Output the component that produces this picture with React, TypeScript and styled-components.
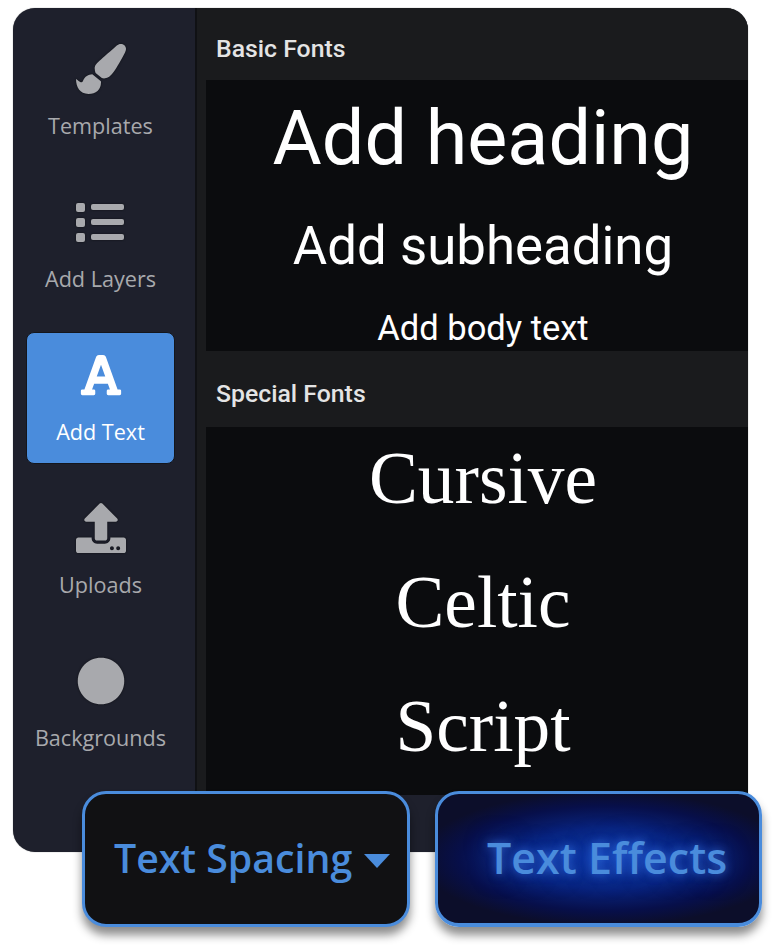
import React from 'react';
import styled, { createGlobalStyle } from 'styled-components';
import { FaCircle, FaFont, FaPaintBrush, FaUpload } from 'react-icons/fa';

const GlobalStyle = createGlobalStyle`
  html, body {
    margin: 0;
    padding: 0;
    background: #fff;
  }
`;

const Page = styled.div`
  position: relative;
  width: 780px;
  height: 945px;
  padding: 8px 32px 0 13px;
  box-sizing: border-box;
  overflow: hidden;
`;

const Panel = styled.div`
  display: flex;
  width: 735px;
  height: 844px;
  background: #1e202c;
  border-radius: 22px;
  overflow: hidden;
  box-shadow: 0 0 1px rgba(0, 0, 0, 0.6);
`;

const Sidebar = styled.nav`
  flex: 0 0 182px;
  box-sizing: border-box;
  padding: 18px 20px 0 13px;
  display: flex;
  flex-direction: column;
  gap: 21px;
`;

const NavItem = styled.div<{ $active?: boolean }>`
  height: 132px;
  box-sizing: border-box;
  display: flex;
  flex-direction: column;
  align-items: center;
  border-radius: 8px;
  background: ${(p) => (p.$active ? '#4a8cdc' : 'transparent')};
  border: 1px solid ${(p) => (p.$active ? '#14161c' : 'transparent')};
  color: ${(p) => (p.$active ? '#fff' : '#a8a9ad')};
  font-family: 'Open Sans', sans-serif;
  font-size: 21.6px;
  font-weight: ${(p) => (p.$active ? 500 : 400)};
`;

const IconSlot = styled.div<{ $active?: boolean }>`
  height: 72px;
  margin-top: 6px;
  display: flex;
  align-items: center;
  justify-content: center;
  svg {
    filter: ${(p) => (p.$active ? 'none' : 'drop-shadow(0 0 1px #0e0f14)')};
  }
`;

const NavLabel = styled.span`
  line-height: 28px;
  margin-top: 7px;
`;

const Content = styled.main`
  flex: 1;
  height: 787px;
  border-left: 2px solid #101114;
  background: #1a1b1d;
  display: flex;
  flex-direction: column;
  padding-left: 9px;
`;

const SectionTitle = styled.h2<{ $h: number }>`
  margin: 0;
  height: ${(p) => p.$h}px;
  box-sizing: border-box;
  padding: 5px 0 0 10px;
  line-height: ${(p) => p.$h - 1}px;
  font-family: Roboto, sans-serif;
  font-size: 24.8px;
  font-weight: 500;
  color: #e4e4e4;
  overflow: hidden;
`;

const Block = styled.div<{ $h: number }>`
  height: ${(p) => p.$h}px;
  box-sizing: border-box;
  padding-left: 12px;
  background: #0b0c0e;
  display: flex;
  flex-direction: column;
  align-items: center;
  color: #fff;
  overflow: hidden;
`;

const BasicLine = styled.div<{ $size: number; $h: number; $top: number }>`
  font-family: Roboto, sans-serif;
  font-size: ${(p) => p.$size}px;
  line-height: ${(p) => p.$h}px;
  height: ${(p) => p.$h}px;
  margin-top: ${(p) => p.$top}px;
  white-space: nowrap;
`;

const SpecialList = styled.div`
  display: flex;
  flex-direction: column;
  align-items: center;
  gap: 24px;
  padding-top: 2px;
`;

const SpecialLine = styled.div`
  font-family: 'Liberation Serif', serif;
  font-size: 73.3px;
  line-height: 100px;
  white-space: nowrap;
`;

const FloatButton = styled.div<{ $left: number; $width: number }>`
  position: absolute;
  top: 791px;
  left: ${(p) => p.$left}px;
  width: ${(p) => p.$width}px;
  height: 136px;
  box-sizing: border-box;
  border: 3px solid #4a8cdc;
  border-radius: 24px;
  box-shadow: 0 8px 10px rgba(0, 0, 0, 0.45);
  display: flex;
  align-items: center;
  padding-bottom: 3px;
  font-family: 'Open Sans', sans-serif;
  color: #4a8cdc;
  white-space: nowrap;
`;

const SpacingButton = styled(FloatButton)`
  background: #111113;
  padding-left: 29px;
  gap: 12px;
  font-size: 39.3px;
  font-weight: 600;
`;

const EffectsButton = styled(FloatButton)`
  background: radial-gradient(ellipse 58% 52% at 52% 50%, #0c36a2 0%, #09247e 45%, #070f4a 78%, #0c0e2a 100%);
  border-bottom-width: 4px;
  padding-left: 49px;
  font-size: 43px;
  font-weight: 600;
  text-shadow: 0 0 10px rgba(70, 140, 255, 0.6), 0 0 24px rgba(30, 80, 220, 0.5);
`;

const Caret = styled.span`
  width: 0;
  height: 0;
  margin-top: 6px;
  border-left: 13px solid transparent;
  border-right: 13px solid transparent;
  border-top: 14px solid #4a8cdc;
`;

const ListIcon = () => (
  <svg width="49" height="40" viewBox="0 0 49 40" fill="currentColor">
    <rect x="0" y="1" width="9" height="9" rx="2" />
    <rect x="0" y="16" width="9" height="9" rx="2" />
    <rect x="0" y="31" width="9" height="9" rx="2" />
    <rect x="15" y="2" width="33" height="6" rx="2" />
    <rect x="15" y="17" width="33" height="6" rx="2" />
    <rect x="15" y="32" width="33" height="6" rx="2" />
  </svg>
);

const navItems = [
  { label: 'Templates', icon: <FaPaintBrush size={50} /> },
  { label: 'Add Layers', icon: <ListIcon /> },
  { label: 'Add Text', icon: <FaFont size={46} />, active: true },
  { label: 'Uploads', icon: <FaUpload size={50} /> },
  { label: 'Backgrounds', icon: <FaCircle size={48} /> },
];

export default function App() {
  return (
    <Page>
      <GlobalStyle />
      <Panel>
        <Sidebar>
          {navItems.map((item) => (
            <NavItem key={item.label} $active={item.active}>
              <IconSlot $active={item.active}>{item.icon}</IconSlot>
              <NavLabel>{item.label}</NavLabel>
            </NavItem>
          ))}
        </Sidebar>
        <Content>
          <SectionTitle $h={72}>Basic Fonts</SectionTitle>
          <Block $h={271}>
            <BasicLine $size={75.5} $h={110} $top={3}>Add heading</BasicLine>
            <BasicLine $size={52.8} $h={105} $top={1}>Add subheading</BasicLine>
            <BasicLine $size={34.5} $h={52} $top={3}>Add body text</BasicLine>
          </Block>
          <SectionTitle $h={76}>Special Fonts</SectionTitle>
          <Block $h={368}>
            <SpecialList>
              <SpecialLine>Cursive</SpecialLine>
              <SpecialLine>Celtic</SpecialLine>
              <SpecialLine>Script</SpecialLine>
            </SpecialList>
          </Block>
        </Content>
      </Panel>
      <SpacingButton $left={82} $width={328}>
        Text Spacing
        <Caret />
      </SpacingButton>
      <EffectsButton $left={435} $width={327}>Text Effects</EffectsButton>
    </Page>
  );
}
